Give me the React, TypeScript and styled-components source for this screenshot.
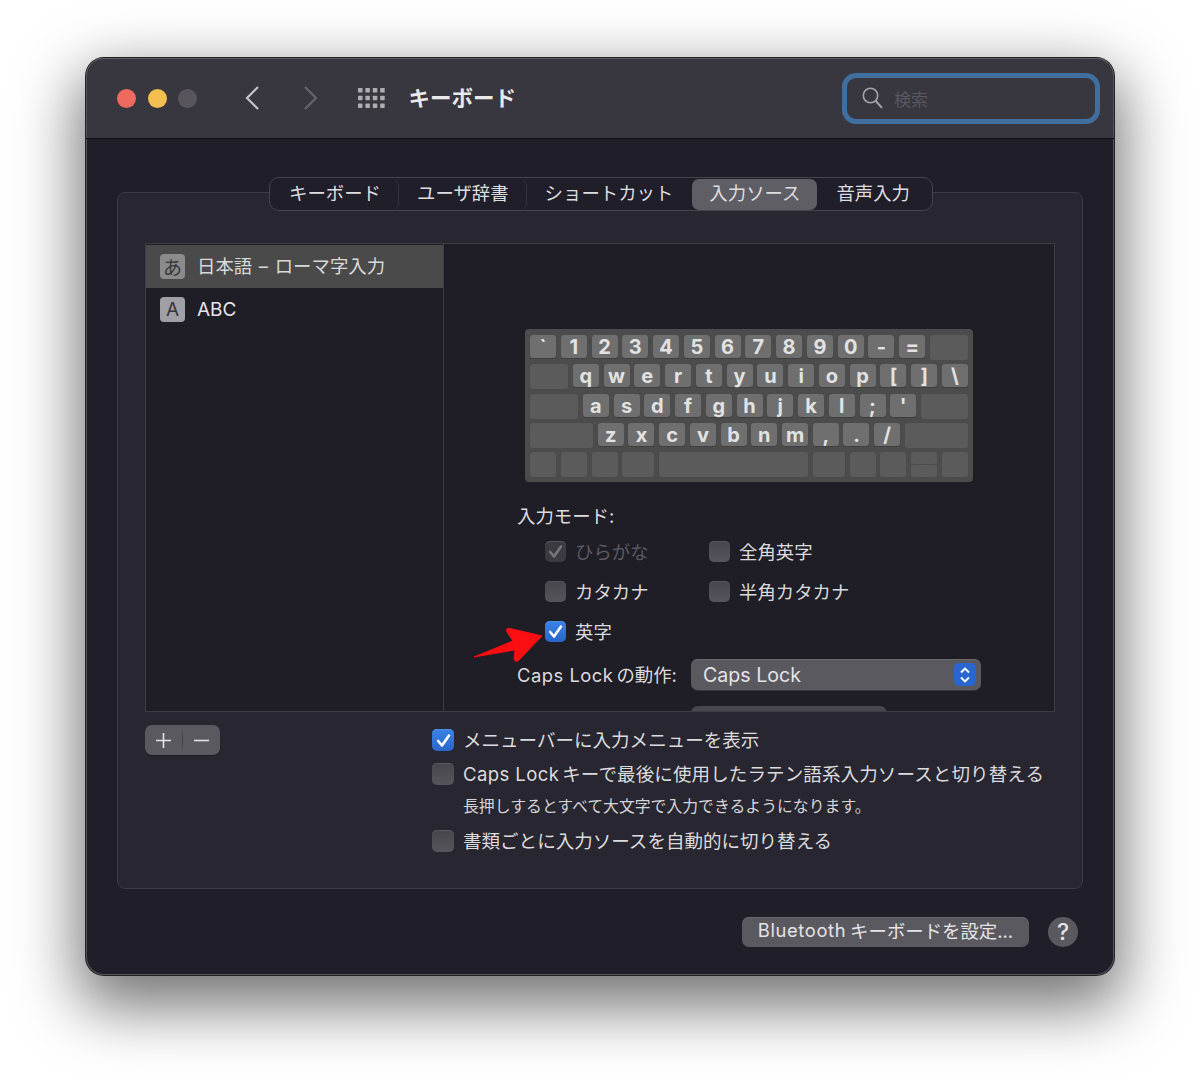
import React from "react";
import styled, { createGlobalStyle } from "styled-components";

const Global = createGlobalStyle`
  html, body { margin: 0; padding: 0; background: #fff; }
  body { font-family: Inter, "Noto Sans CJK JP", sans-serif; color: #dcdbde; }
  * { box-sizing: border-box; }
`;
const Page = styled.div`
  height: 1089px; width: 1200px; padding-top: 58px; overflow: hidden; background: #fff;
`;
const Window = styled.div`
  position: relative; width: 1028px; height: 917px; margin: 0 auto;
  border-radius: 18px; background: #201e28; display: flex; flex-direction: column;
  box-shadow: 0 0 0 1px #222, inset 0 0 0 1px #55545a, 0 24px 62px 8px rgba(0,0,0,.55);
  overflow: visible;
`;
const TitleBar = styled.header`
  height: 81px; flex: none; display: flex; align-items: center; padding: 0 14px 0 31px;
  background: #38363e; border-bottom: 1px solid #0f0e12; border-radius: 18px 18px 0 0;
  box-shadow: inset 0 1px 0 #5f5e64, inset 1px 0 0 #55545a, inset -1px 0 0 #55545a;
`;
const Lights = styled.div` display: flex; gap: 11.7px; `;
const Light = styled.span<{ $c: string }>`
  width: 19px; height: 19px; border-radius: 50%; background: ${p => p.$c};
`;
const NavIcon = styled.svg<{ $ml: number }>` margin-left: ${p => p.$ml}px; flex: none; `;
const Title = styled.h1`
  margin: 0 0 3px 22px; font-size: 21.5px; font-weight: 700; color: #e9e8ea; letter-spacing: 0;
`;
const Search = styled.div`
  margin-left: auto; width: 258px; height: 51px; border: 5px solid #3f6e9f; border-radius: 14px;
  display: flex; align-items: center; padding: 0 0 0 15px; gap: 11px;
  font-size: 17px; color: #5a5860; background: #38363e;
`;
const Content = styled.main`
  flex: 1; display: flex; flex-direction: column; padding: 53px 31px 28px;
`;
const Panel = styled.section`
  height: 697px; background: #282630; border: 1px solid #3d3b44; border-radius: 8px;
  display: flex; flex-direction: column; padding: 0 27px;
`;
const Tabs = styled.nav`
  align-self: center; margin: -16px 0 0 2px; height: 34px; display: flex; align-items: center;
  padding: 0 4px 0 1px; background: #201e28; border: 1px solid #45434c; border-radius: 10px;
`;
const Tab = styled.div<{ $active?: boolean; $sep?: boolean }>`
  height: 31px; display: flex; align-items: center; padding: 0 ${p => p.$sep ? 17 : p.$active ? 17 : 18}px 5px ${p => p.$active ? 17 : 18}px;
  margin: 0 ${p => p.$active ? 1 : 0}px;
  font-size: 18.4px; color: #dedde0; border-radius: 7px; white-space: nowrap;
  background: ${p => p.$active ? "#605e65" : "transparent"};
  border-right: ${p => p.$sep ? "1px solid #34323a" : "none"};
`;
const Pane = styled.div`
  margin-top: 32px; height: 469px; display: flex; background: #1f1d26; border: 1px solid #3d3b44;
  overflow: hidden; flex: none;
`;
const SourceList = styled.ul`
  margin: 0; padding: 1px 0 0; list-style: none; width: 298px; flex: none; border-right: 1px solid #3d3b44;
`;
const SourceRow = styled.li<{ $sel?: boolean }>`
  height: 43px; display: flex; align-items: center; padding: 0 0 0 14px; gap: 12px; font-size: 18.4px;
  background: ${p => p.$sel ? "#4a4a4a" : "transparent"};
  color: ${p => p.$sel ? "#d9d9d9" : "#e4e3e6"};
`;
const SourceIcon = styled.span<{ $sel?: boolean }>`
  width: 25px; height: 25px; border-radius: 4px; display: flex; align-items: center; justify-content: center;
  background: ${p => p.$sel ? "#8c8b8b" : "#a09fa5"}; color: #37363b; font-size: 19px; font-weight: 400;
`;
const SourceText = styled.span<{ $size?: number }>`
  padding-bottom: ${p => p.$size ? 1 : 3}px; word-spacing: 1.5px; font-size: ${p => p.$size ?? 18.4}px;
`;
const Detail = styled.div`
  flex: 1; min-width: 0; padding: 85px 0 0 73px; display: flex; flex-direction: column;
`;
const Board = styled.div`
  margin-left: 8px; width: 448px; height: 153px; flex: none; padding: 6px 5px 0; background: #4c4c4c; border-radius: 4px;
  display: flex; flex-direction: column; gap: 5px;
`;
const KeyRow = styled.div` height: 24.3px; display: flex; justify-content: space-between; align-items: flex-start; `;
const Key = styled.span<{ $w?: number }>`
  width: ${p => p.$w ?? 26}px; height: 23px; flex: none; border-radius: 3px; background: #6f6f6f;
  box-shadow: 0 1px 0 #3f3f3f; color: #e2e2e2; font-size: 20px; font-weight: 700; line-height: 24px; text-align: center;
`;
const Blank = styled.span<{ $w?: number }>`
  width: ${p => p.$w ?? 26}px; height: 25px; flex: none; border-radius: 3px; background: #5b5b5b;
`;
const ArrowKey = styled.span`
  width: 26px; height: 25px; flex: none; display: flex; flex-direction: column; gap: 1px;
`;
const ArrowHalf = styled.span` flex: 1; background: #5b5b5b; border-radius: 3px; `;
const ModeLabel = styled.div` margin-top: 22px; font-size: 18.4px; line-height: 24px; color: #dcdbde; `;
const ModeGrid = styled.div`
  margin: 3px 0 0 28px; display: grid; grid-template-columns: 164px auto; grid-auto-rows: 40px; justify-content: start;
`;
const Check = styled.label<{ $dim?: boolean }>`
  display: flex; align-items: center; gap: 9px; font-size: 18.4px; white-space: nowrap;
  color: ${p => p.$dim ? "#5c5a62" : "#dcdbde"};
`;
const Box = styled.span<{ $on?: boolean; $dim?: boolean; $size?: number }>`
  width: ${p => p.$size ?? 21}px; height: ${p => p.$size ?? 21}px; flex: none; border-radius: 5px; display: flex; align-items: center; justify-content: center;
  background: ${p => p.$on ? "linear-gradient(#3b82e6,#2a66c9)" : p.$dim ? "#3c3a41" : "linear-gradient(#47464d,#56555b)"};
  box-shadow: inset 0 1px 0 ${p => p.$on ? "#4b8deb" : "#57565c"};
`;
const Latin = styled.span<{ $ls?: number; $gap?: number }>`
  margin-right: ${p => p.$gap ?? 3}px; letter-spacing: ${p => p.$ls ?? 0}px;
`;
const CapsRow = styled.div` margin-top: 8px; height: 32px; display: flex; align-items: center; font-size: 18.4px; `;
const CapsLabel = styled.span` width: 174px; flex: none; white-space: nowrap; padding-bottom: 1px; `;
const Select = styled.div`
  position: relative; width: 290px; height: 31px; border-radius: 7px; background: #5b5960; padding-left: 12px;
  display: flex; align-items: center; font-size: 19.6px; color: #e4e3e6;
  box-shadow: inset 0 1px 0 #6b6970, 0 1px 0 #3a3840;
`;
const Stepper = styled.span`
  position: absolute; right: 5px; top: 4px; width: 22px; height: 23px; border-radius: 5px; background: #2a66cf;
  display: flex; align-items: center; justify-content: center;
`;
const ClippedSelect = styled.div`
  margin: 16px 0 0 174px; width: 196px; height: 31px; flex: none; border-radius: 7px; background: #48464e;
`;
const Lower = styled.div` display: flex; margin-top: 13px; `;
const PlusMinus = styled.div`
  width: 75px; height: 30px; flex: none; border-radius: 7px; background: #5b5960; display: flex; align-items: center;
  box-shadow: 0 1px 0 #1c1a22;
`;
const PMButton = styled.span<{ $sep?: boolean }>`
  flex: 1; height: 16px; display: flex; align-items: center; justify-content: center;
  border-right: ${p => p.$sep ? "1px solid #47454c" : "none"};
`;
const Options = styled.div` margin-left: 212px; display: flex; flex-direction: column; `;
const OptionRow = styled(Check)<{ $h: number; $ls?: number }>`
  height: ${p => p.$h}px; font-size: 18.55px; letter-spacing: ${p => p.$ls ?? 0}px;
`;
const OptionText = styled.span` padding-bottom: 3px; `;
const Hint = styled.div`
  margin: 0 0 9px 31px; height: 24px; display: flex; align-items: center; font-size: 15.85px; color: #d6d5d8;
`;
const Footer = styled.footer` margin-top: 28px; display: flex; justify-content: flex-end; align-items: center; gap: 19px; padding-right: 5px; `;
const Button = styled.div`
  width: 287px; height: 30px; padding-bottom: 4px; border-radius: 7px; background: #5b5960; display: flex; align-items: center; justify-content: center;
  font-size: 18.4px; color: #e4e3e6; box-shadow: inset 0 1px 0 #69676e;
`;
const Help = styled.div`
  width: 30px; height: 30px; border-radius: 50%; background: #5b5960; display: flex; align-items: center; justify-content: center;
  font-size: 23px; color: #e4e3e6; font-weight: 500;
`;
const RedArrow = styled.svg` position: absolute; left: 0; top: 0; pointer-events: none; `;

const CheckMark = ({ c = "#fff" }: { c?: string }) => (
  <svg width="15" height="15" viewBox="0 0 15 15"><path d="M2.2 8 L6 12.5 L13 2.5" fill="none" stroke={c} strokeWidth="2.6" strokeLinecap="round" strokeLinejoin="round" /></svg>
);
const Item = ({ label, on, dim }: { label: string; on?: boolean; dim?: boolean }) => (
  <Check $dim={dim}><Box $on={on} $dim={dim}>{(on || dim) && <CheckMark c={dim ? "#77767b" : "#fff"} />}</Box>{label}</Check>
);
const Opt = ({ children, on, h, ls }: { children: React.ReactNode; on?: boolean; h: number; ls?: number }) => (
  <OptionRow $h={h} $ls={ls}><Box $on={on} $size={22}>{on && <CheckMark />}</Box><OptionText>{children}</OptionText></OptionRow>
);
const keys = (s: string) => s.split(" ").map((k, i) => <Key key={i}>{k}</Key>);

export default function App() {
  return (
    <Page>
      <Global />
      <Window>
        <TitleBar>
          <Lights>
            <Light $c="#ee6a5e" /><Light $c="#f5bf4f" /><Light $c="#58565c" />
          </Lights>
          <NavIcon $ml={48} width="14" height="24" viewBox="0 0 14 24"><path d="M13 1 L2 12 L13 23" fill="none" stroke="#c5c4c8" strokeWidth="2.2" /></NavIcon>
          <NavIcon $ml={45} width="14" height="24" viewBox="0 0 14 24"><path d="M1 1 L12 12 L1 23" fill="none" stroke="#67656c" strokeWidth="2.2" /></NavIcon>
          <NavIcon $ml={40} width="28" height="21" viewBox="0 0 28 21">
            {[0, 1, 2, 3].map(c => [0, 1, 2].map(r => <rect key={`${c}-${r}`} x={c * 7.4} y={r * 7.7} width="4.5" height="4.5" rx="0.6" fill="#aeadb2" />))}
          </NavIcon>
          <Title>キーボード</Title>
          <Search>
            <svg width="21" height="22" viewBox="0 0 21 22"><circle cx="8.5" cy="8.5" r="7.2" fill="none" stroke="#a5a4a8" strokeWidth="1.6" /><path d="M13.8 14 L19.5 20.3" stroke="#a5a4a8" strokeWidth="2" strokeLinecap="round" /></svg>
            検索
          </Search>
        </TitleBar>
        <Content>
          <Panel>
            <Tabs>
              <Tab $sep>キーボード</Tab>
              <Tab $sep>ユーザ辞書</Tab>
              <Tab>ショートカット</Tab>
              <Tab $active>入力ソース</Tab>
              <Tab>音声入力</Tab>
            </Tabs>
            <Pane>
              <SourceList>
                <SourceRow $sel><SourceIcon $sel>あ</SourceIcon><SourceText>日本語 – ローマ字入力</SourceText></SourceRow>
                <SourceRow><SourceIcon>A</SourceIcon><SourceText $size={19}>ABC</SourceText></SourceRow>
              </SourceList>
              <Detail>
                <Board>
                  <KeyRow>{keys("` 1 2 3 4 5 6 7 8 9 0 - =")}<Blank $w={38} /></KeyRow>
                  <KeyRow><Blank $w={38} />{keys("q w e r t y u i o p [ ] \\")}</KeyRow>
                  <KeyRow><Blank $w={48} />{keys("a s d f g h j k l ; '")}<Blank $w={47} /></KeyRow>
                  <KeyRow><Blank $w={63} />{keys("z x c v b n m , . /")}<Blank $w={63} /></KeyRow>
                  <KeyRow>
                    <Blank /><Blank /><Blank /><Blank $w={32} /><Blank $w={149} /><Blank $w={32} /><Blank /><Blank />
                    <ArrowKey><ArrowHalf /><ArrowHalf /></ArrowKey><Blank />
                  </KeyRow>
                </Board>
                <ModeLabel>入力モード:</ModeLabel>
                <ModeGrid>
                  <Item label="ひらがな" dim />
                  <Item label="全角英字" />
                  <Item label="カタカナ" />
                  <Item label="半角カタカナ" />
                  <Item label="英字" on />
                </ModeGrid>
                <CapsRow>
                  <CapsLabel><Latin $ls={0.5}>Caps Lock</Latin>の動作:</CapsLabel>
                  <Select>
                    Caps Lock
                    <Stepper>
                      <svg width="12" height="18" viewBox="0 0 12 18"><path d="M2 6.5 L6 2.5 L10 6.5 M2 11.5 L6 15.5 L10 11.5" fill="none" stroke="#fff" strokeWidth="1.9" /></svg>
                    </Stepper>
                  </Select>
                </CapsRow>
                <ClippedSelect />
              </Detail>
            </Pane>
            <Lower>
              <PlusMinus>
                <PMButton $sep><svg width="17" height="17" viewBox="0 0 17 17"><path d="M8.5 1 V16 M1 8.5 H16" stroke="#e4e3e6" strokeWidth="1.6" /></svg></PMButton>
                <PMButton><svg width="17" height="17" viewBox="0 0 17 17"><path d="M1 8.5 H16" stroke="#e4e3e6" strokeWidth="1.6" /></svg></PMButton>
              </PlusMinus>
              <Options>
                <Opt on h={30}>メニューバーに入力メニューを表示</Opt>
                <Opt h={38} ls={0.1}><Latin $ls={0.4}>Caps Lock</Latin>キーで最後に使用したラテン語系入力ソースと切り替える</Opt>
                <Hint>長押しするとすべて大文字で入力できるようになります。</Hint>
                <Opt h={30}>書類ごとに入力ソースを自動的に切り替える</Opt>
              </Options>
            </Lower>
          </Panel>
          <Footer>
            <Button><Latin $ls={0.6} $gap={4}>Bluetooth</Latin>キーボードを設定...</Button>
            <Help>?</Help>
          </Footer>
        </Content>
        <RedArrow width="1028" height="917" viewBox="86 58 1028 917">
          <path d="M542 636 L510 628.5 Q505 628 507 632 L513 641 L474 657 L515 650 L514 659 Q515 663 519 660 Z" fill="#fb0d12" stroke="#fb0d12" strokeWidth="1" strokeLinejoin="round" />
        </RedArrow>
      </Window>
    </Page>
  );
}
